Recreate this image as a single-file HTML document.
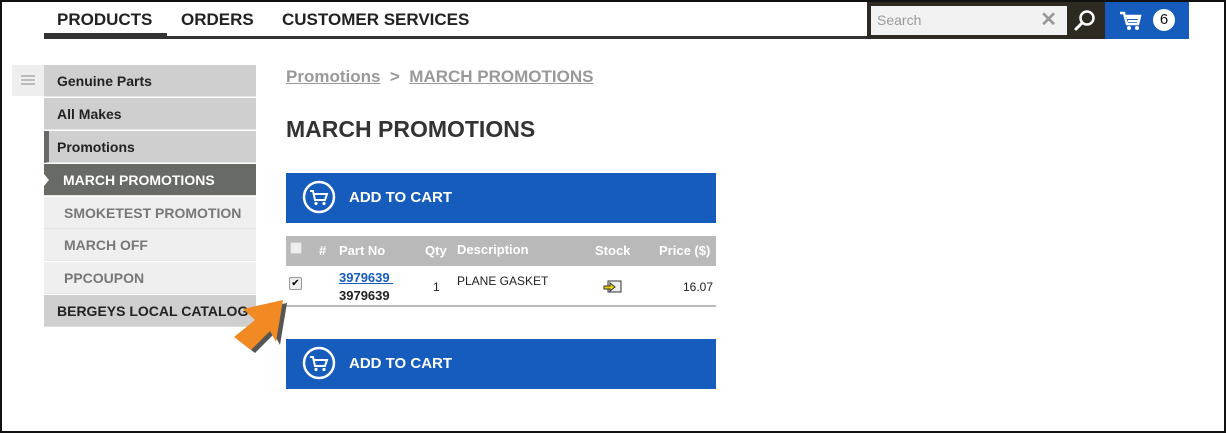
<!DOCTYPE html>
<html><head><style>
*{margin:0;padding:0;box-sizing:border-box}
body{width:1226px;height:433px;background:#fff;font-family:"Liberation Sans",Arial,sans-serif;position:relative;overflow:hidden;}
.a{position:absolute}
.nav{font-weight:bold;font-size:17px;color:#222;top:10px}
.side div{position:absolute;left:44px;width:212px;height:32px;font-weight:bold;font-size:14px;line-height:32px;padding-left:13px;border-bottom:1px solid #e4e4e4}
.dark{background:#cfcfcf;color:#222}
.light{background:#efefef;color:#777;padding-left:20px!important}
.btn{left:286px;width:430px;height:50px;background:#155cbd;color:#fff;font-weight:bold;font-size:16px}
.th{color:#fff;font-weight:bold;font-size:13px;top:243px}
</style></head><body>
<div class="a nav" style="left:57px">PRODUCTS</div>
<div class="a nav" style="left:181px">ORDERS</div>
<div class="a nav" style="left:282px">CUSTOMER SERVICES</div>
<div class="a" style="left:44px;top:36px;width:826px;height:3px;background:#333"></div>
<div class="a" style="left:44px;top:33px;width:123px;height:5px;background:#333"></div>
<div class="a" style="left:867px;top:2px;width:238px;height:37px;background:#2e2a22"></div>
<div class="a" style="left:871px;top:6px;width:196px;height:29px;background:#f2f2f2;color:#999;font-size:14px;line-height:29px;padding-left:6px">Search<span style="position:absolute;right:10px;color:#999;font-size:20px;font-weight:bold">✕</span></div>
<svg class="a" style="left:1073px;top:8px" width="24" height="24"><circle cx="14" cy="10" r="6.5" fill="none" stroke="#fff" stroke-width="2.5"/><line x1="9" y1="15" x2="3" y2="21" stroke="#fff" stroke-width="3" stroke-linecap="round"/></svg>
<div class="a" style="left:1105px;top:2px;width:84px;height:37px;background:#155cbd"></div>
<svg class="a" style="left:1119px;top:10px" width="24" height="22"><path d="M1 3h4l3 11h11l2-8H7" fill="none" stroke="#fff" stroke-width="2.5"/><path d="M8 8h12M9 11h10" stroke="#fff" stroke-width="2"/><circle cx="10" cy="18" r="2" fill="#fff"/><circle cx="18" cy="18" r="2" fill="#fff"/></svg>
<div class="a" style="left:1153px;top:9px;width:22px;height:22px;border-radius:50%;background:#fff;color:#111;font-size:15px;text-align:center;line-height:22px">6</div>

<div class="a" style="left:12px;top:65px;width:32px;height:31px;background:#eee"></div>
<div class="a" style="left:21px;top:75px;width:14px;height:2px;background:#bbb;box-shadow:0 4px 0 #bbb,0 8px 0 #bbb"></div>
<div class="side">
<div class="dark" style="top:65px">Genuine Parts</div>
<div class="dark" style="top:98px">All Makes</div>
<div class="dark" style="top:131px;border-left:5px solid #676a65;padding-left:8px">Promotions</div>
<div style="top:164px;background:#676a65;color:#fff;padding-left:19px">MARCH PROMOTIONS</div>
<div class="light" style="top:197px">SMOKETEST PROMOTION</div>
<div class="light" style="top:229px">MARCH OFF</div>
<div class="light" style="top:262px">PPCOUPON</div>
<div class="dark" style="top:295px;border-bottom:1px solid #ddd">BERGEYS LOCAL CATALOG</div>
</div>
<div class="a" style="left:44px;top:174px;width:0;height:0;border-top:6px solid transparent;border-bottom:6px solid transparent;border-left:5px solid #fff"></div>

<div class="a" style="left:286px;top:67px;font-size:17px;font-weight:bold;color:#999"><u>Promotions</u> &nbsp;&gt;&nbsp; <u>MARCH PROMOTIONS</u></div>
<div class="a" style="left:286px;top:116px;font-size:23px;font-weight:bold;color:#333">MARCH PROMOTIONS</div>

<div class="a btn" style="top:173px"></div>
<div class="a btn" style="top:339px"></div>
<svg class="a" style="left:302px;top:180px" width="34" height="34"><circle cx="17" cy="17" r="15" fill="none" stroke="#fff" stroke-width="2.5"/><path d="M8 11h3l2 9h10l2-6H12" fill="none" stroke="#fff" stroke-width="2"/><circle cx="14" cy="23.5" r="1.6" fill="#fff"/><circle cx="22" cy="23.5" r="1.6" fill="#fff"/></svg>
<svg class="a" style="left:302px;top:346px" width="34" height="34"><circle cx="17" cy="17" r="15" fill="none" stroke="#fff" stroke-width="2.5"/><path d="M8 11h3l2 9h10l2-6H12" fill="none" stroke="#fff" stroke-width="2"/><circle cx="14" cy="23.5" r="1.6" fill="#fff"/><circle cx="22" cy="23.5" r="1.6" fill="#fff"/></svg>
<div class="a" style="left:349px;top:189px;color:#fff;font-weight:bold;font-size:15px">ADD TO CART</div>
<div class="a" style="left:349px;top:355px;color:#fff;font-weight:bold;font-size:15px">ADD TO CART</div>

<div class="a" style="left:286px;top:236px;width:430px;height:30px;background:#b9b9b9"></div>
<div class="a" style="left:290px;top:242px;width:12px;height:12px;background:#eee;border:1px solid #ccc;border-radius:2px"></div>
<div class="a th" style="left:319px">#</div>
<div class="a th" style="left:339px">Part No</div>
<div class="a th" style="left:425px">Qty</div>
<div class="a th" style="left:457px;top:242px">Description</div>
<div class="a th" style="left:595px">Stock</div>
<div class="a th" style="left:659px">Price ($)</div>
<div class="a" style="left:289px;top:277px;width:13px;height:13px;background:#eee;border:1px solid #999;border-radius:2px;font-size:10px;line-height:11px;text-align:center">✔</div>
<div class="a" style="left:339px;top:270px;font-size:13px;font-weight:bold;color:#155cbd;text-decoration:underline">3979639&nbsp;</div>
<div class="a" style="left:339px;top:288px;font-size:13px;font-weight:bold;color:#222">3979639</div>
<div class="a" style="left:433px;top:280px;font-size:12px;color:#222">1</div>
<div class="a" style="left:457px;top:274px;font-size:12px;color:#222">PLANE GASKET</div>
<svg class="a" style="left:603px;top:280px" width="20" height="15"><rect x="5" y="1" width="13" height="11" fill="#eee" stroke="#333"/><path d="M1 6h6V3l5 4-5 4V9H1z" fill="#f0d000" stroke="#333" stroke-width="1"/></svg>
<div class="a" style="left:683px;top:280px;font-size:12px;color:#222">16.07</div>
<div class="a" style="left:286px;top:305px;width:430px;height:2px;background:#bbb"></div>

<svg class="a" style="left:0;top:0" width="300" height="360">
<polygon points="287,303 247,311 259,322 238,340 255,353 274,334 280,345" fill="#555"/>
<polygon points="283,300 243,309 255,320 234,337 251,350 270,331 276,342" fill="#f28a24"/>
</svg>
<div class="a" style="left:0;top:0;width:1226px;height:433px;border:2px solid #111"></div>
</body></html>
